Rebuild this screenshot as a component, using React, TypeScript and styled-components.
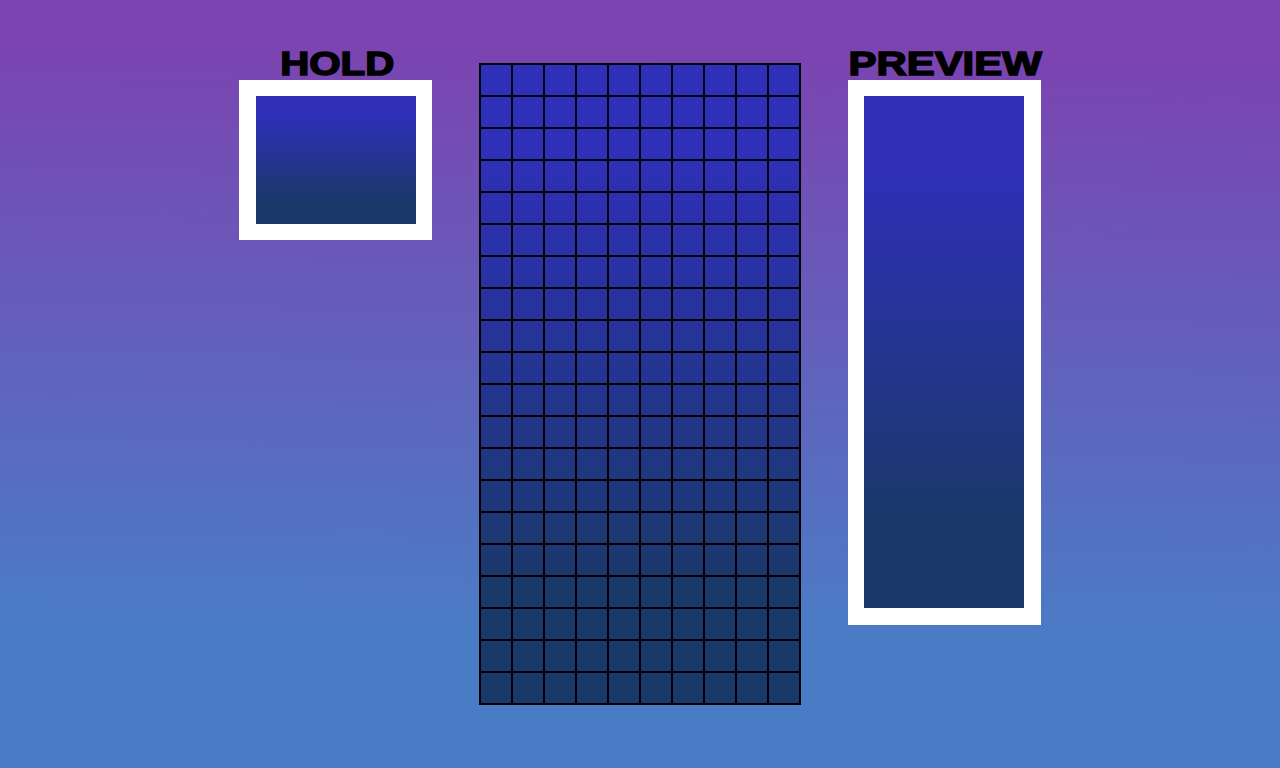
import React from 'react';
import styled, { createGlobalStyle } from 'styled-components';

const COLUMNS = 10;
const ROWS = 20;

const GlobalStyle = createGlobalStyle`
  html, body {
    margin: 0;
    height: 100%;
  }

  body {
    overflow: hidden;
    font-family: 'Liberation Sans', Arial, sans-serif;
  }
`;

const Page = styled.div`
  display: flex;
  justify-content: center;
  align-items: flex-start;
  gap: 47px;
  box-sizing: border-box;
  height: 768px;
  padding-top: 45px;
  background: linear-gradient(181deg, #7b44b0 8%, #4a7cc6 82%);
`;

const Side = styled.section`
  display: flex;
  flex-direction: column;
  align-items: center;
  width: 193px;
`;

const Title = styled.h2<{ $stretch: number; $shift: number }>`
  height: 35px;
  margin: 0;
  font-size: 33px;
  line-height: 37px;
  font-weight: 700;
  color: #000;
  white-space: nowrap;
  -webkit-text-stroke: 1.5px #000;
  transform: translateX(${({ $shift }) => $shift}px) scaleX(${({ $stretch }) => $stretch});
`;

const Well = styled.div<{ $height: number; $widths: string }>`
  box-sizing: content-box;
  width: 160px;
  height: ${({ $height }) => $height}px;
  border-style: solid;
  border-color: #fff;
  border-width: ${({ $widths }) => $widths};
  background: linear-gradient(180deg, #2f2fb9 14%, #1a3968 84%);
`;

const Board = styled.div`
  display: grid;
  grid-template-columns: repeat(${COLUMNS}, 32px);
  grid-auto-rows: 32px;
  margin-top: 18px;
  border: 1px solid #000;
  background: linear-gradient(180deg, #2f2fb9 14%, #1a3968 84%);
`;

const Cell = styled.div`
  box-sizing: border-box;
  border: 1px solid #000;
`;

export default function App() {
  return (
    <>
      <GlobalStyle />
      <Page>
        <Side>
          <Title $stretch={1.22} $shift={1.5}>HOLD</Title>
          <Well $height={128} $widths="16px 16px 16px 17px" />
        </Side>
        <Board>
          {Array.from({ length: COLUMNS * ROWS }, (_, i) => (
            <Cell key={i} />
          ))}
        </Board>
        <Side>
          <Title $stretch={1.27} $shift={1}>PREVIEW</Title>
          <Well $height={512} $widths="16px 17px 17px 16px" />
        </Side>
      </Page>
    </>
  );
}
